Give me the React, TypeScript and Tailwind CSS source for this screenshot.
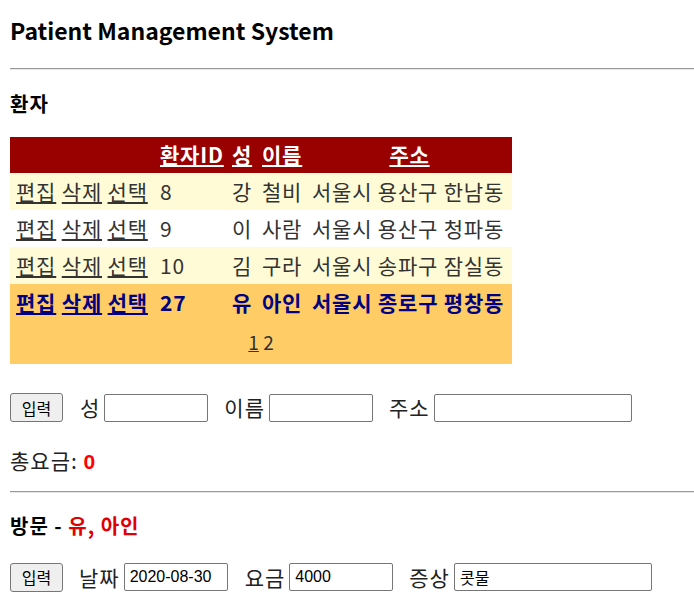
import React from 'react';

const KR = "font-['Malgun_Gothic','Noto_Sans_CJK_KR',sans-serif]";

const patients = [
  { id: 8, last: '강', first: '철비', addr: '서울시 용산구 한남동' },
  { id: 9, last: '이', first: '사람', addr: '서울시 용산구 청파동' },
  { id: 10, last: '김', first: '구라', addr: '서울시 송파구 잠실동' },
  { id: 27, last: '유', first: '아인', addr: '서울시 종로구 평창동' },
];

const Hr = ({ className }: { className: string }) => (
  <div className={`border-t border-t-[#9a9a9a] border-b border-b-[#e8e8e8] ${className}`} />
);

const Field = ({ label, w, value, ml }: { label: string; w: string; value?: string; ml: string }) => (
  <div className={`flex items-center ${ml}`}>
    <span className="text-[21px] tracking-[1px] text-[#222] whitespace-nowrap">{label}</span>
    <input
      readOnly
      value={value ?? ''}
      className={`ml-[4px] h-[28px] ${w} border border-[#767676] rounded-[2px] px-[5px] text-[16px] text-black font-['Liberation_Sans','Noto_Sans_CJK_KR',sans-serif] outline-none`}
    />
  </div>
);

const InputButton = () => (
  <button className="w-[53px] h-[29px] border border-[#767676] rounded-[3px] bg-[#efefef] text-[16px] text-black whitespace-nowrap">
    입력
  </button>
);

export default function App() {
  return (
    <div className={`${KR} bg-white text-black pl-[10px] pb-[14px]`}>
      <div className="mt-[15px] h-[30px] leading-[30px] text-[23px] font-bold">Patient Management System</div>
      <Hr className="mt-[23px]" />

      <div className="mt-[20px] h-[28px] leading-[28px] text-[20px] tracking-[1px] font-bold">환자</div>

      <table className="mt-[19px] w-[502px] table-fixed border-collapse text-[21px] tracking-[0.8px] whitespace-nowrap">
        <thead>
          <tr className="bg-[#990000] text-white font-bold h-[36px]">
            <th className="px-[5px] w-[145px]"></th>
            <th className="px-[5px] w-[72px] text-left underline">환자ID</th>
            <th className="px-[5px] w-[30px] text-left underline">성</th>
            <th className="px-[5px] w-[50px] text-left underline">이름</th>
            <th className="px-[5px] text-center underline">주소</th>
          </tr>
        </thead>
        <tbody>
          {patients.map((p, i) => {
            const selected = i === 3;
            const bg = selected
              ? 'bg-[#ffcc66] text-[#000080] font-bold'
              : i === 1
                ? 'bg-white text-[#333333]'
                : 'bg-[#fffbd6] text-[#333333]';
            return (
              <tr key={p.id} className={`${bg} h-[37px]`}>
                <td className="px-[6px]">
                  <span className="underline">편집</span> <span className="underline">삭제</span>{' '}
                  <span className="underline">선택</span>
                </td>
                <td className="px-[5px]">{p.id}</td>
                <td className="px-[5px]">{p.last}</td>
                <td className="px-[5px]">{p.first}</td>
                <td className="px-[5px]">{p.addr}</td>
              </tr>
            );
          })}
          <tr className="bg-[#ffcc66] text-[#333333] h-[43px]">
            <td colSpan={5} className="text-center text-[19px] tracking-normal">
              <span className="underline">1</span> <span>2</span>
            </td>
          </tr>
        </tbody>
      </table>

      <div className="mt-[28px] flex items-center">
        <InputButton />
        <Field label="성" w="w-[104px]" ml="ml-[17px]" />
        <Field label="이름" w="w-[104px]" ml="ml-[16px]" />
        <Field label="주소" w="w-[198px]" ml="ml-[16px]" />
      </div>

      <div className="mt-[22px] h-[28px] leading-[28px] text-[21px] tracking-[1px] text-[#222]">
        총요금: <span className="text-[#ff0000] font-bold font-['Liberation_Sans',sans-serif]">0</span>
      </div>

      <Hr className="mt-[17px]" />

      <div className="mt-[19px] h-[28px] leading-[28px] text-[20px] tracking-[1px] font-bold">
        방문 - <span className="text-[#e00000]">유, 아인</span>
      </div>

      <div className="mt-[22px] flex items-center">
        <InputButton />
        <Field label="날짜" w="w-[104px]" value="2020-08-30" ml="ml-[16px]" />
        <Field label="요금" w="w-[104px]" value="4000" ml="ml-[17px]" />
        <Field label="증상" w="w-[198px]" value="콧물" ml="ml-[16px]" />
      </div>
    </div>
  );
}
